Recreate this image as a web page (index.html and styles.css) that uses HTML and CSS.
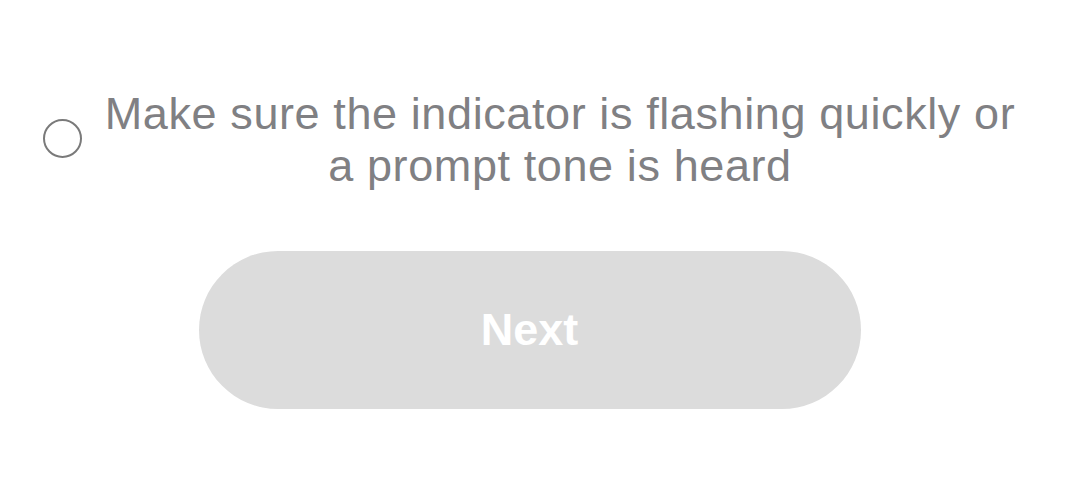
FILE: index.html
```html
<!DOCTYPE html>
<html>
<head>
<meta charset="utf-8">
<link rel="stylesheet" href="styles.css">
</head>
<body>
<div class="page">
  <div class="check-row">
    <span class="radio"></span>
    <p class="check-text">Make sure the indicator is flashing quickly or a prompt tone is heard</p>
  </div>
  <button class="next-btn">Next</button>
</div>
</body>
</html>
```
FILE: styles.css
```css
html, body {
  margin: 0;
  padding: 0;
  background: #ffffff;
}
.page {
  width: 1083px;
  height: 479px;
  display: flex;
  flex-direction: column;
  align-items: center;
  padding-top: 88px;
  box-sizing: border-box;
  font-family: "Liberation Sans", Arial, sans-serif;
}
.check-row {
  display: flex;
  align-items: center;
  width: 1083px;
  padding-left: 43px;
  box-sizing: border-box;
}
.radio {
  flex: none;
  width: 35px;
  height: 35px;
  border: 2.5px solid #7a7a7a;
  border-radius: 50%;
  margin-top: -3px;
}
.check-text {
  margin: 0 0 0 18px;
  width: 920px;
  text-align: center;
  font-size: 45px;
  letter-spacing: 0.6px;
  line-height: 52px;
  color: #808083;
}
.next-btn {
  margin-top: 59px;
  margin-right: 24px;
  width: 662px;
  height: 158px;
  border: none;
  border-radius: 79px;
  background: #dcdcdc;
  color: #ffffff;
  font-family: "Liberation Sans", Arial, sans-serif;
  font-weight: bold;
  font-size: 45px;
  padding: 0;
}
```
